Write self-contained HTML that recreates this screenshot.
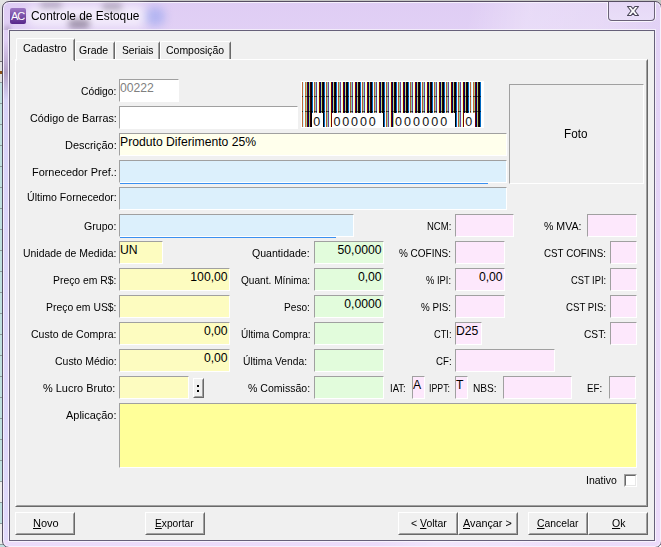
<!DOCTYPE html><html><head><meta charset="utf-8"><title>Controle de Estoque</title><style>
html,body{margin:0;padding:0;}
body{width:661px;height:547px;overflow:hidden;background:#fff;font-family:"Liberation Sans",sans-serif;font-size:11px;color:#000;position:relative;}
div,span{box-sizing:border-box;}
.a{position:absolute;}
.win{left:2px;top:1px;width:660px;height:547px;border-radius:7px;background:linear-gradient(100deg,rgba(255,255,255,0) 62%,rgba(255,255,255,0.28) 70%,rgba(255,255,255,0.22) 80%,rgba(255,255,255,0) 90%),linear-gradient(to bottom,#dfcdf4 0,#e1d0f5 30px,#ecdbfa 100%);border:1px solid #564e62;box-shadow:inset 0 0 0 1px #f6f0fd;overflow:hidden;}
.client{left:9px;top:30px;width:646px;height:511px;background:#f0f0f0;border:1px solid #66607a;box-shadow:0 0 0 1px rgba(255,255,255,0.6);}
.lbl{position:absolute;white-space:nowrap;font-size:11px;line-height:13px;height:13px;}
.inp{position:absolute;border:1px solid;border-color:#a0a0a0 #fff #fff #a0a0a0;font-size:12.2px;line-height:14px;padding:1px 1px 0 0;white-space:nowrap;overflow:hidden;}
.r{text-align:right;padding-right:1.4px;}
.btn{position:absolute;height:23px;background:#f0f0f0;border:1px solid;border-color:#fff #696969 #696969 #fff;font-size:11px;text-align:center;line-height:19px;}
.btn:after{content:"";position:absolute;left:0;top:0;right:0;bottom:0;border:1px solid;border-color:#f0f0f0 #a0a0a0 #a0a0a0 #f0f0f0;}
u{text-decoration:underline;}
</style></head><body>
<div class="a" style="left:0;top:0;width:661px;height:8px;background:#c6c6c4"></div>
<div class="a" style="left:0;top:0;width:10px;height:61px;background:linear-gradient(#e4e4e4,#d0d0d0 30px)"></div>
<div class="a" style="left:0;top:61px;width:10px;height:1px;background:#707070"></div>
<div class="a" style="left:0;top:62px;width:10px;height:20px;background:#e0e0e0"></div>
<div class="a" style="left:0;top:71px;width:2px;height:3px;background:#8a5218"></div>
<div class="a" style="left:0;top:82px;width:10px;height:378px;background:repeating-linear-gradient(#8c9c9c 0 1px,#bfe0e0 1px 21px)"></div>
<div class="a" style="left:0;top:460px;width:10px;height:87px;background:repeating-linear-gradient(#8c9c9c 0 1px,#bfe0e0 1px 21px,#8c9c9c 21px 22px,#ececec 22px 42px)"></div>
<div class="a win"></div>
<div class="a" style="left:4px;top:40px;width:4px;height:500px;background:linear-gradient(rgba(205,214,252,0) 0,rgba(120,100,140,0.45) 32px,rgba(205,214,252,0.45) 60px,rgba(205,214,252,0.4) 100%)"></div>
<div class="a" style="left:26px;top:5px;width:122px;height:22px;border-radius:11px;background:rgba(255,255,255,0.6);filter:blur(5px);"></div>
<div class="a" style="left:2px;top:2px;width:300px;height:28px;overflow:hidden;border-radius:7px 0 0 0;"><div class="a" style="left:66px;top:17px;width:22px;height:10px;border-radius:5px;background:rgba(70,55,85,0.45);filter:blur(3px);"></div><div class="a" style="left:100px;top:1px;width:20px;height:7px;border-radius:4px;background:rgba(90,80,100,0.4);filter:blur(3px);"></div><div class="a" style="left:38px;top:0px;width:22px;height:6px;border-radius:3px;background:rgba(90,80,100,0.4);filter:blur(3px);"></div><div class="a" style="left:143px;top:5px;width:20px;height:19px;border-radius:8px;background:rgba(90,130,235,0.32);filter:blur(4px);"></div><div class="a" style="left:3px;top:24px;width:5px;height:40px;background:rgba(90,70,110,0.35);filter:blur(2px);"></div></div>
<div class="a" style="left:10px;top:8px;width:16px;height:16px;border-radius:2px;background:linear-gradient(#9d78c4,#57268a);color:#fff;font-size:11px;line-height:16px;text-align:center;letter-spacing:-1.2px;text-indent:-1px;overflow:hidden;">AC</div>
<div class="a" style="left:31.4px;top:8px;font-size:12px;transform:scaleX(0.9908);transform-origin:0 0;line-height:16px;white-space:nowrap;">Controle de Estoque</div>
<div class="a" style="left:607px;top:2px;width:49px;height:20px;border:1px solid rgba(255,255,255,0.75);border-top:none;border-radius:0 0 5px 5px;"></div>
<div class="a" style="left:608px;top:2px;width:47px;height:19px;border:1px solid #6a6278;border-top:none;border-radius:0 0 4px 4px;background:linear-gradient(#e6d8f6,#e9def8);"></div>
<svg class="a" style="left:625px;top:4px" width="16" height="14" viewBox="0 0 16 14"><path d="M2.5 2.5h3.6l1.9 2.3 1.9-2.3h3.6L9.9 7l3.6 4.5H9.9L8 9.2 6.1 11.5H2.5L6.1 7z" fill="#fdfdfd" stroke="#4a4658" stroke-width="1.1" stroke-linejoin="round"/></svg>
<div class="a client"></div>
<div class="a" style="left:15px;top:59px;width:633px;height:448px;border:1px solid;border-color:#fff #696969 #696969 #fff;"></div>
<div class="a" style="left:16px;top:60px;width:631px;height:446px;border:1px solid;border-color:#f0f0f0 #a0a0a0 #a0a0a0 #f0f0f0;"></div>
<div class="a" style="left:75px;top:41px;width:40px;height:18px;background:#f0f0f0;border:1px solid;border-color:#fff #696969 transparent #fff;border-bottom:none;border-radius:2px 2px 0 0;"></div>
<div class="a" style="left:113px;top:43px;width:1px;height:16px;background:#a0a0a0"></div>
<div class="lbl" style="left:79.4px;top:44px;font-size:11px;transform:scaleX(0.9549);transform-origin:0 0;">Grade</div>
<div class="a" style="left:115px;top:41px;width:45px;height:18px;background:#f0f0f0;border:1px solid;border-color:#fff #696969 transparent #fff;border-bottom:none;border-radius:2px 2px 0 0;"></div>
<div class="a" style="left:158px;top:43px;width:1px;height:16px;background:#a0a0a0"></div>
<div class="lbl" style="left:121.6px;top:44px;font-size:11px;transform:scaleX(0.9338);transform-origin:0 0;">Seriais</div>
<div class="a" style="left:160px;top:41px;width:71px;height:18px;background:#f0f0f0;border:1px solid;border-color:#fff #696969 transparent #fff;border-bottom:none;border-radius:2px 2px 0 0;"></div>
<div class="a" style="left:229px;top:43px;width:1px;height:16px;background:#a0a0a0"></div>
<div class="lbl" style="left:166.2px;top:44px;font-size:11px;transform:scaleX(0.9519);transform-origin:0 0;">Composi&ccedil;&atilde;o</div>
<div class="a" style="left:16px;top:38px;width:59px;height:23px;background:#f0f0f0;border:1px solid;border-color:#fff #696969 transparent #fff;border-bottom:none;border-radius:2px 2px 0 0;"></div>
<div class="a" style="left:73px;top:40px;width:1px;height:20px;background:#a0a0a0"></div>
<div class="lbl" style="left:23.2px;top:42px;font-size:11px;transform:scaleX(0.9789);transform-origin:0 0;">Cadastro</div>
<div class="lbl" style="left:81.4px;top:85px;font-size:11px;transform:scaleX(0.9335);transform-origin:0 0;">C&oacute;digo:</div>
<div class="inp " style="left:119px;top:79px;width:60px;height:23px;background:#fff;color:#808080;">00222</div>
<div class="lbl" style="left:30.0px;top:112px;font-size:11px;transform:scaleX(0.9789);transform-origin:0 0;">C&oacute;digo de Barras:</div>
<div class="inp " style="left:119px;top:106px;width:179px;height:23px;background:#fff;"></div>
<div class="lbl" style="left:65.1px;top:139px;font-size:11px;transform:scaleX(0.9948);transform-origin:0 0;">Descri&ccedil;&atilde;o:</div>
<div class="inp " style="left:119px;top:133px;width:388px;height:23px;background:#ffffec;">Produto Diferimento 25%</div>
<div class="lbl" style="left:32.0px;top:166px;font-size:11px;transform:scaleX(0.9907);transform-origin:0 0;">Fornecedor Pref.:</div>
<div class="inp " style="left:119px;top:160px;width:388px;height:23px;background:#dcf0fc;"></div>
<div class="lbl" style="left:27.0px;top:191px;font-size:11px;transform:scaleX(0.9599);transform-origin:0 0;">&Uacute;ltimo Fornecedor:</div>
<div class="inp " style="left:119px;top:187px;width:388px;height:23px;background:#dcf0fc;"></div>
<div class="lbl" style="left:84.4px;top:220px;font-size:11px;transform:scaleX(0.9631);transform-origin:0 0;">Grupo:</div>
<div class="inp " style="left:119px;top:214px;width:235px;height:23px;background:#dcf0fc;"></div>
<div class="a" style="left:120px;top:183px;width:368px;height:1px;background:#3a90f0"></div>
<div class="a" style="left:120px;top:237px;width:216px;height:1px;background:#3a90f0"></div>
<div class="lbl" style="left:23.3px;top:247px;font-size:11px;transform:scaleX(0.9495);transform-origin:0 0;">Unidade de Medida:</div>
<div class="inp " style="left:119px;top:241px;width:44px;height:23px;background:#fdfcc0;">UN</div>
<div class="lbl" style="left:53.3px;top:274px;font-size:11px;transform:scaleX(0.9442);transform-origin:0 0;">Pre&ccedil;o em R$:</div>
<div class="inp r" style="left:119px;top:268px;width:111px;height:23px;background:#fdfcc0;">100,00</div>
<div class="lbl" style="left:46.3px;top:301px;font-size:11px;transform:scaleX(0.9451);transform-origin:0 0;">Pre&ccedil;o em US$:</div>
<div class="inp " style="left:119px;top:295px;width:111px;height:23px;background:#fdfcc0;"></div>
<div class="lbl" style="left:31.3px;top:328px;font-size:11px;transform:scaleX(0.9578);transform-origin:0 0;">Custo de Compra:</div>
<div class="inp r" style="left:119px;top:322px;width:111px;height:23px;background:#fdfcc0;">0,00</div>
<div class="lbl" style="left:55.1px;top:355px;font-size:11px;transform:scaleX(0.9520);transform-origin:0 0;">Custo M&eacute;dio:</div>
<div class="inp r" style="left:119px;top:349px;width:111px;height:23px;background:#fdfcc0;">0,00</div>
<div class="lbl" style="left:43.3px;top:382px;font-size:11px;transform:scaleX(0.9950);transform-origin:0 0;">% Lucro Bruto:</div>
<div class="inp " style="left:119px;top:376px;width:70px;height:23px;background:#fdfcc0;"></div>
<div class="btn" style="left:193px;top:378px;width:11px;height:20px;"></div>
<div class="a" style="left:197px;top:385px;width:2px;height:2px;background:#000"></div><div class="a" style="left:197px;top:390px;width:2px;height:2px;background:#000"></div>
<div class="lbl" style="left:66.3px;top:409px;font-size:11px;transform:scaleX(0.9948);transform-origin:0 0;">Aplica&ccedil;&atilde;o:</div>
<div class="inp " style="left:119px;top:403px;width:518px;height:65px;background:#ffff99;"></div>
<div class="lbl" style="left:252.1px;top:247px;font-size:11px;transform:scaleX(0.9610);transform-origin:0 0;">Quantidade:</div>
<div class="inp r" style="left:314px;top:241px;width:70px;height:23px;background:#e2fcdc;">50,0000</div>
<div class="lbl" style="left:240.6px;top:274px;font-size:11px;transform:scaleX(0.9188);transform-origin:0 0;">Quant. M&iacute;nima:</div>
<div class="inp r" style="left:314px;top:268px;width:70px;height:23px;background:#e2fcdc;">0,00</div>
<div class="lbl" style="left:284.4px;top:301px;font-size:11px;transform:scaleX(0.9204);transform-origin:0 0;">Peso:</div>
<div class="inp r" style="left:314px;top:295px;width:70px;height:23px;background:#e2fcdc;">0,0000</div>
<div class="lbl" style="left:240.6px;top:328px;font-size:11px;transform:scaleX(0.9109);transform-origin:0 0;">&Uacute;ltima Compra:</div>
<div class="inp " style="left:314px;top:322px;width:70px;height:23px;background:#e2fcdc;"></div>
<div class="lbl" style="left:243.1px;top:355px;font-size:11px;transform:scaleX(0.9360);transform-origin:0 0;">&Uacute;ltima Venda:</div>
<div class="inp " style="left:314px;top:349px;width:70px;height:23px;background:#e2fcdc;"></div>
<div class="lbl" style="left:247.6px;top:382px;font-size:11px;transform:scaleX(0.9584);transform-origin:0 0;">% Comiss&atilde;o:</div>
<div class="inp " style="left:314px;top:376px;width:70px;height:23px;background:#e2fcdc;"></div>
<div class="lbl" style="left:427.1px;top:220px;font-size:11px;transform:scaleX(0.8645);transform-origin:0 0;">NCM:</div>
<div class="inp " style="left:455px;top:214px;width:59px;height:23px;background:#fde8fc;"></div>
<div class="lbl" style="left:399.4px;top:247px;font-size:11px;transform:scaleX(0.9051);transform-origin:0 0;">% COFINS:</div>
<div class="inp " style="left:455px;top:241px;width:50px;height:23px;background:#fde8fc;"></div>
<div class="lbl" style="left:426.4px;top:274px;font-size:11px;transform:scaleX(0.8520);transform-origin:0 0;">% IPI:</div>
<div class="inp r" style="left:455px;top:268px;width:50px;height:23px;background:#fde8fc;">0,00</div>
<div class="lbl" style="left:421.4px;top:301px;font-size:11px;transform:scaleX(0.8922);transform-origin:0 0;">% PIS:</div>
<div class="inp " style="left:455px;top:295px;width:50px;height:23px;background:#fde8fc;"></div>
<div class="lbl" style="left:433.9px;top:328px;font-size:11px;transform:scaleX(0.8421);transform-origin:0 0;">CTI:</div>
<div class="inp " style="left:455px;top:322px;width:27px;height:23px;background:#fde8fc;">D25</div>
<div class="lbl" style="left:436.4px;top:355px;font-size:11px;transform:scaleX(0.8796);transform-origin:0 0;">CF:</div>
<div class="inp " style="left:455px;top:349px;width:100px;height:23px;background:#fde8fc;"></div>
<div class="lbl" style="left:390.4px;top:382px;font-size:11px;transform:scaleX(0.8599);transform-origin:0 0;">IAT:</div>
<div class="inp " style="left:412px;top:376px;width:13px;height:23px;background:#fde8fc;">A</div>
<div class="lbl" style="left:429.0px;top:382px;font-size:11px;transform:scaleX(0.7986);transform-origin:0 0;">IPPT:</div>
<div class="inp " style="left:455px;top:376px;width:13px;height:23px;background:#fde8fc;">T</div>
<div class="lbl" style="left:473.0px;top:382px;font-size:11px;transform:scaleX(0.9226);transform-origin:0 0;">NBS:</div>
<div class="inp " style="left:503px;top:376px;width:69px;height:23px;background:#fde8fc;"></div>
<div class="lbl" style="left:586.6px;top:382px;font-size:11px;transform:scaleX(0.8818);transform-origin:0 0;">EF:</div>
<div class="inp " style="left:609px;top:376px;width:27px;height:23px;background:#fde8fc;"></div>
<div class="lbl" style="left:543.6px;top:220px;font-size:11px;transform:scaleX(0.9635);transform-origin:0 0;">% MVA:</div>
<div class="inp " style="left:587px;top:214px;width:50px;height:23px;background:#fde8fc;"></div>
<div class="lbl" style="left:544.3px;top:247px;font-size:11px;transform:scaleX(0.8908);transform-origin:0 0;">CST COFINS:</div>
<div class="inp " style="left:610px;top:241px;width:27px;height:23px;background:#fde8fc;"></div>
<div class="lbl" style="left:571.1px;top:274px;font-size:11px;transform:scaleX(0.8483);transform-origin:0 0;">CST IPI:</div>
<div class="inp " style="left:610px;top:268px;width:27px;height:23px;background:#fde8fc;"></div>
<div class="lbl" style="left:566.1px;top:301px;font-size:11px;transform:scaleX(0.8783);transform-origin:0 0;">CST PIS:</div>
<div class="inp " style="left:610px;top:295px;width:27px;height:23px;background:#fde8fc;"></div>
<div class="lbl" style="left:584.1px;top:328px;font-size:11px;transform:scaleX(0.9269);transform-origin:0 0;">CST:</div>
<div class="inp " style="left:610px;top:322px;width:27px;height:23px;background:#fde8fc;"></div>
<div class="a" style="left:509px;top:84px;width:135px;height:100px;border:1px solid;border-color:#a0a0a0 #fff #fff #a0a0a0;"></div>
<div class="lbl" style="left:564.2px;top:128px;font-size:12.2px;transform:scaleX(0.9594);transform-origin:0 0;">Foto</div>
<svg class="a" style="left:301px;top:81px" width="183" height="47" viewBox="301 81 183 47" shape-rendering="crispEdges"><rect x="301" y="81" width="183" height="47" fill="#fff"/><rect x="302" y="82" width="1" height="45" fill="#c06838"/><rect x="303" y="82" width="1" height="45" fill="#c8f8ff"/><rect x="305" y="82" width="1" height="45" fill="#c87040"/><rect x="306" y="82" width="1" height="45" fill="#98d498"/><rect x="307" y="82" width="1" height="45" fill="#700000"/><rect x="308" y="82" width="1" height="45" fill="#000068"/><rect x="309" y="82" width="1" height="45" fill="#b0d070"/><rect x="310" y="82" width="1" height="45" fill="#300000"/><rect x="311" y="82" width="1" height="45" fill="#000008"/><rect x="312" y="82" width="1" height="45" fill="#0068c0"/><rect x="314" y="82" width="1" height="45" fill="#b85c30"/><rect x="315" y="82" width="1" height="45" fill="#8cd4a8"/><rect x="316" y="82" width="1" height="45" fill="#70409a"/><rect x="317" y="82" width="1" height="45" fill="#e0ffff"/><rect x="318" y="82" width="1" height="45" fill="#ffffb0"/><rect x="319" y="82" width="1" height="45" fill="#780000"/><rect x="320" y="82" width="1" height="45" fill="#000068"/><rect x="321" y="82" width="1" height="45" fill="#b0d880"/><rect x="322" y="82" width="1" height="45" fill="#300000"/><rect x="323" y="82" width="1" height="45" fill="#000008"/><rect x="324" y="82" width="1" height="45" fill="#0068c0"/><rect x="325" y="82" width="1" height="45" fill="#f0f8ff"/><rect x="326" y="82" width="1" height="45" fill="#b85c30"/><rect x="327" y="82" width="1" height="45" fill="#8cd4a8"/><rect x="328" y="82" width="1" height="45" fill="#70409a"/><rect x="329" y="82" width="1" height="45" fill="#e0ffff"/><rect x="330" y="82" width="1" height="45" fill="#ffffb0"/><rect x="331" y="82" width="1" height="45" fill="#780000"/><rect x="332" y="82" width="1" height="45" fill="#000068"/><rect x="333" y="82" width="1" height="45" fill="#b0d880"/><rect x="334" y="82" width="1" height="45" fill="#300000"/><rect x="335" y="82" width="1" height="45" fill="#000008"/><rect x="336" y="82" width="1" height="45" fill="#0068c0"/><rect x="337" y="82" width="1" height="45" fill="#f0f8ff"/><rect x="338" y="82" width="1" height="45" fill="#b85c30"/><rect x="339" y="82" width="1" height="45" fill="#8cd4a8"/><rect x="340" y="82" width="1" height="45" fill="#70409a"/><rect x="341" y="82" width="1" height="45" fill="#e0ffff"/><rect x="342" y="82" width="1" height="45" fill="#ffffb0"/><rect x="343" y="82" width="1" height="45" fill="#780000"/><rect x="344" y="82" width="1" height="45" fill="#000068"/><rect x="345" y="82" width="1" height="45" fill="#b0d880"/><rect x="346" y="82" width="1" height="45" fill="#300000"/><rect x="347" y="82" width="1" height="45" fill="#000008"/><rect x="348" y="82" width="1" height="45" fill="#0068c0"/><rect x="349" y="82" width="1" height="45" fill="#f0f8ff"/><rect x="350" y="82" width="1" height="45" fill="#b85c30"/><rect x="351" y="82" width="1" height="45" fill="#8cd4a8"/><rect x="352" y="82" width="1" height="45" fill="#70409a"/><rect x="353" y="82" width="1" height="45" fill="#e0ffff"/><rect x="354" y="82" width="1" height="45" fill="#ffffb0"/><rect x="355" y="82" width="1" height="45" fill="#780000"/><rect x="356" y="82" width="1" height="45" fill="#000068"/><rect x="357" y="82" width="1" height="45" fill="#b0d880"/><rect x="358" y="82" width="1" height="45" fill="#300000"/><rect x="359" y="82" width="1" height="45" fill="#000008"/><rect x="360" y="82" width="1" height="45" fill="#0068c0"/><rect x="361" y="82" width="1" height="45" fill="#f0f8ff"/><rect x="362" y="82" width="1" height="45" fill="#b85c30"/><rect x="363" y="82" width="1" height="45" fill="#8cd4a8"/><rect x="364" y="82" width="1" height="45" fill="#70409a"/><rect x="365" y="82" width="1" height="45" fill="#e0ffff"/><rect x="366" y="82" width="1" height="45" fill="#ffffb0"/><rect x="367" y="82" width="1" height="45" fill="#780000"/><rect x="368" y="82" width="1" height="45" fill="#000068"/><rect x="369" y="82" width="1" height="45" fill="#b0d880"/><rect x="370" y="82" width="1" height="45" fill="#300000"/><rect x="371" y="82" width="1" height="45" fill="#000008"/><rect x="372" y="82" width="1" height="45" fill="#0068c0"/><rect x="373" y="82" width="1" height="45" fill="#f0f8ff"/><rect x="374" y="82" width="1" height="45" fill="#b85c30"/><rect x="375" y="82" width="1" height="45" fill="#8cd4a8"/><rect x="376" y="82" width="1" height="45" fill="#70409a"/><rect x="377" y="82" width="1" height="45" fill="#e0ffff"/><rect x="378" y="82" width="1" height="45" fill="#ffffb0"/><rect x="379" y="82" width="1" height="45" fill="#780000"/><rect x="380" y="82" width="1" height="45" fill="#000068"/><rect x="381" y="82" width="1" height="45" fill="#b0d880"/><rect x="382" y="82" width="1" height="45" fill="#300000"/><rect x="383" y="82" width="1" height="45" fill="#000008"/><rect x="384" y="82" width="1" height="45" fill="#0068c0"/><rect x="385" y="82" width="1" height="45" fill="#f0f8ff"/><rect x="386" y="82" width="1" height="45" fill="#b85c30"/><rect x="387" y="82" width="1" height="45" fill="#8cd4a8"/><rect x="388" y="82" width="1" height="45" fill="#70409a"/><rect x="389" y="82" width="1" height="45" fill="#e0ffff"/><rect x="390" y="82" width="1" height="45" fill="#ffffb0"/><rect x="391" y="82" width="1" height="45" fill="#780000"/><rect x="392" y="82" width="1" height="45" fill="#000068"/><rect x="393" y="82" width="1" height="45" fill="#b0d880"/><rect x="394" y="82" width="1" height="45" fill="#300000"/><rect x="395" y="82" width="1" height="45" fill="#000008"/><rect x="396" y="82" width="1" height="45" fill="#0068c0"/><rect x="397" y="82" width="1" height="45" fill="#f0f8ff"/><rect x="398" y="82" width="1" height="45" fill="#b85c30"/><rect x="399" y="82" width="1" height="45" fill="#8cd4a8"/><rect x="400" y="82" width="1" height="45" fill="#70409a"/><rect x="401" y="82" width="1" height="45" fill="#e0ffff"/><rect x="402" y="82" width="1" height="45" fill="#ffffb0"/><rect x="403" y="82" width="1" height="45" fill="#780000"/><rect x="404" y="82" width="1" height="45" fill="#000068"/><rect x="405" y="82" width="1" height="45" fill="#b0d880"/><rect x="406" y="82" width="1" height="45" fill="#300000"/><rect x="407" y="82" width="1" height="45" fill="#000008"/><rect x="408" y="82" width="1" height="45" fill="#0068c0"/><rect x="409" y="82" width="1" height="45" fill="#f0f8ff"/><rect x="410" y="82" width="1" height="45" fill="#b85c30"/><rect x="411" y="82" width="1" height="45" fill="#8cd4a8"/><rect x="412" y="82" width="1" height="45" fill="#70409a"/><rect x="413" y="82" width="1" height="45" fill="#e0ffff"/><rect x="414" y="82" width="1" height="45" fill="#ffffb0"/><rect x="415" y="82" width="1" height="45" fill="#780000"/><rect x="416" y="82" width="1" height="45" fill="#000068"/><rect x="417" y="82" width="1" height="45" fill="#b0d880"/><rect x="418" y="82" width="1" height="45" fill="#300000"/><rect x="419" y="82" width="1" height="45" fill="#000008"/><rect x="420" y="82" width="1" height="45" fill="#0068c0"/><rect x="421" y="82" width="1" height="45" fill="#f0f8ff"/><rect x="422" y="82" width="1" height="45" fill="#b85c30"/><rect x="423" y="82" width="1" height="45" fill="#8cd4a8"/><rect x="424" y="82" width="1" height="45" fill="#70409a"/><rect x="425" y="82" width="1" height="45" fill="#e0ffff"/><rect x="426" y="82" width="1" height="45" fill="#ffffb0"/><rect x="427" y="82" width="1" height="45" fill="#780000"/><rect x="428" y="82" width="1" height="45" fill="#000068"/><rect x="429" y="82" width="1" height="45" fill="#b0d880"/><rect x="430" y="82" width="1" height="45" fill="#300000"/><rect x="431" y="82" width="1" height="45" fill="#000008"/><rect x="432" y="82" width="1" height="45" fill="#0068c0"/><rect x="433" y="82" width="1" height="45" fill="#f0f8ff"/><rect x="434" y="82" width="1" height="45" fill="#b85c30"/><rect x="435" y="82" width="1" height="45" fill="#8cd4a8"/><rect x="436" y="82" width="1" height="45" fill="#70409a"/><rect x="437" y="82" width="1" height="45" fill="#e0ffff"/><rect x="438" y="82" width="1" height="45" fill="#ffffb0"/><rect x="439" y="82" width="1" height="45" fill="#780000"/><rect x="440" y="82" width="1" height="45" fill="#000068"/><rect x="441" y="82" width="1" height="45" fill="#b0d880"/><rect x="442" y="82" width="1" height="45" fill="#300000"/><rect x="443" y="82" width="1" height="45" fill="#000008"/><rect x="444" y="82" width="1" height="45" fill="#0068c0"/><rect x="445" y="82" width="1" height="45" fill="#f0f8ff"/><rect x="446" y="82" width="1" height="45" fill="#b85c30"/><rect x="447" y="82" width="1" height="45" fill="#8cd4a8"/><rect x="448" y="82" width="1" height="45" fill="#70409a"/><rect x="449" y="82" width="1" height="45" fill="#e0ffff"/><rect x="450" y="82" width="1" height="45" fill="#ffffb0"/><rect x="451" y="82" width="1" height="45" fill="#780000"/><rect x="452" y="82" width="1" height="45" fill="#000068"/><rect x="453" y="82" width="1" height="45" fill="#b0d880"/><rect x="454" y="82" width="1" height="45" fill="#300000"/><rect x="455" y="82" width="1" height="45" fill="#000008"/><rect x="456" y="82" width="1" height="45" fill="#0068c0"/><rect x="457" y="82" width="1" height="45" fill="#f0f8ff"/><rect x="458" y="82" width="1" height="45" fill="#b85c30"/><rect x="459" y="82" width="1" height="45" fill="#8cd4a8"/><rect x="460" y="82" width="1" height="45" fill="#70409a"/><rect x="461" y="82" width="1" height="45" fill="#e0ffff"/><rect x="462" y="82" width="1" height="45" fill="#ffffb0"/><rect x="463" y="82" width="1" height="45" fill="#780000"/><rect x="464" y="82" width="1" height="45" fill="#000068"/><rect x="465" y="82" width="1" height="45" fill="#b0d880"/><rect x="466" y="82" width="1" height="45" fill="#300000"/><rect x="467" y="82" width="1" height="45" fill="#000008"/><rect x="468" y="82" width="1" height="45" fill="#0068c0"/><rect x="469" y="82" width="1" height="45" fill="#f0f8ff"/><rect x="470" y="82" width="1" height="45" fill="#c06838"/><rect x="471" y="82" width="1" height="45" fill="#c8f8ff"/><rect x="473" y="82" width="1" height="45" fill="#c87040"/><rect x="474" y="82" width="1" height="45" fill="#98d498"/><rect x="475" y="82" width="1" height="45" fill="#700000"/><rect x="476" y="82" width="1" height="45" fill="#000068"/><rect x="477" y="82" width="1" height="45" fill="#b0d070"/><rect x="478" y="82" width="1" height="45" fill="#300000"/><rect x="479" y="82" width="1" height="45" fill="#000008"/><rect x="480" y="82" width="1" height="45" fill="#0068c0"/><rect x="302" y="96" width="1" height="1" fill="#502b17"/><rect x="302" y="111" width="1" height="1" fill="#502b17"/><rect x="305" y="96" width="1" height="1" fill="#542f1a"/><rect x="305" y="111" width="1" height="1" fill="#542f1a"/><rect x="306" y="96" width="1" height="1" fill="#3f593f"/><rect x="306" y="111" width="1" height="1" fill="#3f593f"/><rect x="307" y="96" width="1" height="1" fill="#2f0000"/><rect x="307" y="111" width="1" height="1" fill="#2f0000"/><rect x="308" y="96" width="1" height="1" fill="#00002b"/><rect x="308" y="111" width="1" height="1" fill="#00002b"/><rect x="309" y="96" width="1" height="1" fill="#49572f"/><rect x="309" y="111" width="1" height="1" fill="#49572f"/><rect x="310" y="96" width="1" height="1" fill="#140000"/><rect x="310" y="111" width="1" height="1" fill="#140000"/><rect x="311" y="96" width="1" height="1" fill="#000003"/><rect x="311" y="111" width="1" height="1" fill="#000003"/><rect x="312" y="96" width="1" height="1" fill="#002b50"/><rect x="312" y="111" width="1" height="1" fill="#002b50"/><rect x="314" y="96" width="1" height="1" fill="#4d2614"/><rect x="314" y="111" width="1" height="1" fill="#4d2614"/><rect x="315" y="96" width="1" height="1" fill="#3a5946"/><rect x="315" y="111" width="1" height="1" fill="#3a5946"/><rect x="316" y="96" width="1" height="1" fill="#2f1a40"/><rect x="316" y="111" width="1" height="1" fill="#2f1a40"/><rect x="319" y="96" width="1" height="1" fill="#320000"/><rect x="319" y="111" width="1" height="1" fill="#320000"/><rect x="320" y="96" width="1" height="1" fill="#00002b"/><rect x="320" y="111" width="1" height="1" fill="#00002b"/><rect x="321" y="96" width="1" height="1" fill="#495a35"/><rect x="321" y="111" width="1" height="1" fill="#495a35"/><rect x="322" y="96" width="1" height="1" fill="#140000"/><rect x="322" y="111" width="1" height="1" fill="#140000"/><rect x="323" y="96" width="1" height="1" fill="#000003"/><rect x="323" y="111" width="1" height="1" fill="#000003"/><rect x="324" y="96" width="1" height="1" fill="#002b50"/><rect x="324" y="111" width="1" height="1" fill="#002b50"/><rect x="326" y="96" width="1" height="1" fill="#4d2614"/><rect x="326" y="111" width="1" height="1" fill="#4d2614"/><rect x="327" y="96" width="1" height="1" fill="#3a5946"/><rect x="327" y="111" width="1" height="1" fill="#3a5946"/><rect x="328" y="96" width="1" height="1" fill="#2f1a40"/><rect x="328" y="111" width="1" height="1" fill="#2f1a40"/><rect x="331" y="96" width="1" height="1" fill="#320000"/><rect x="331" y="111" width="1" height="1" fill="#320000"/><rect x="332" y="96" width="1" height="1" fill="#00002b"/><rect x="332" y="111" width="1" height="1" fill="#00002b"/><rect x="333" y="96" width="1" height="1" fill="#495a35"/><rect x="333" y="111" width="1" height="1" fill="#495a35"/><rect x="334" y="96" width="1" height="1" fill="#140000"/><rect x="334" y="111" width="1" height="1" fill="#140000"/><rect x="335" y="96" width="1" height="1" fill="#000003"/><rect x="335" y="111" width="1" height="1" fill="#000003"/><rect x="336" y="96" width="1" height="1" fill="#002b50"/><rect x="336" y="111" width="1" height="1" fill="#002b50"/><rect x="338" y="96" width="1" height="1" fill="#4d2614"/><rect x="338" y="111" width="1" height="1" fill="#4d2614"/><rect x="339" y="96" width="1" height="1" fill="#3a5946"/><rect x="339" y="111" width="1" height="1" fill="#3a5946"/><rect x="340" y="96" width="1" height="1" fill="#2f1a40"/><rect x="340" y="111" width="1" height="1" fill="#2f1a40"/><rect x="343" y="96" width="1" height="1" fill="#320000"/><rect x="343" y="111" width="1" height="1" fill="#320000"/><rect x="344" y="96" width="1" height="1" fill="#00002b"/><rect x="344" y="111" width="1" height="1" fill="#00002b"/><rect x="345" y="96" width="1" height="1" fill="#495a35"/><rect x="345" y="111" width="1" height="1" fill="#495a35"/><rect x="346" y="96" width="1" height="1" fill="#140000"/><rect x="346" y="111" width="1" height="1" fill="#140000"/><rect x="347" y="96" width="1" height="1" fill="#000003"/><rect x="347" y="111" width="1" height="1" fill="#000003"/><rect x="348" y="96" width="1" height="1" fill="#002b50"/><rect x="348" y="111" width="1" height="1" fill="#002b50"/><rect x="350" y="96" width="1" height="1" fill="#4d2614"/><rect x="350" y="111" width="1" height="1" fill="#4d2614"/><rect x="351" y="96" width="1" height="1" fill="#3a5946"/><rect x="351" y="111" width="1" height="1" fill="#3a5946"/><rect x="352" y="96" width="1" height="1" fill="#2f1a40"/><rect x="352" y="111" width="1" height="1" fill="#2f1a40"/><rect x="355" y="96" width="1" height="1" fill="#320000"/><rect x="355" y="111" width="1" height="1" fill="#320000"/><rect x="356" y="96" width="1" height="1" fill="#00002b"/><rect x="356" y="111" width="1" height="1" fill="#00002b"/><rect x="357" y="96" width="1" height="1" fill="#495a35"/><rect x="357" y="111" width="1" height="1" fill="#495a35"/><rect x="358" y="96" width="1" height="1" fill="#140000"/><rect x="358" y="111" width="1" height="1" fill="#140000"/><rect x="359" y="96" width="1" height="1" fill="#000003"/><rect x="359" y="111" width="1" height="1" fill="#000003"/><rect x="360" y="96" width="1" height="1" fill="#002b50"/><rect x="360" y="111" width="1" height="1" fill="#002b50"/><rect x="362" y="96" width="1" height="1" fill="#4d2614"/><rect x="362" y="111" width="1" height="1" fill="#4d2614"/><rect x="363" y="96" width="1" height="1" fill="#3a5946"/><rect x="363" y="111" width="1" height="1" fill="#3a5946"/><rect x="364" y="96" width="1" height="1" fill="#2f1a40"/><rect x="364" y="111" width="1" height="1" fill="#2f1a40"/><rect x="367" y="96" width="1" height="1" fill="#320000"/><rect x="367" y="111" width="1" height="1" fill="#320000"/><rect x="368" y="96" width="1" height="1" fill="#00002b"/><rect x="368" y="111" width="1" height="1" fill="#00002b"/><rect x="369" y="96" width="1" height="1" fill="#495a35"/><rect x="369" y="111" width="1" height="1" fill="#495a35"/><rect x="370" y="96" width="1" height="1" fill="#140000"/><rect x="370" y="111" width="1" height="1" fill="#140000"/><rect x="371" y="96" width="1" height="1" fill="#000003"/><rect x="371" y="111" width="1" height="1" fill="#000003"/><rect x="372" y="96" width="1" height="1" fill="#002b50"/><rect x="372" y="111" width="1" height="1" fill="#002b50"/><rect x="374" y="96" width="1" height="1" fill="#4d2614"/><rect x="374" y="111" width="1" height="1" fill="#4d2614"/><rect x="375" y="96" width="1" height="1" fill="#3a5946"/><rect x="375" y="111" width="1" height="1" fill="#3a5946"/><rect x="376" y="96" width="1" height="1" fill="#2f1a40"/><rect x="376" y="111" width="1" height="1" fill="#2f1a40"/><rect x="379" y="96" width="1" height="1" fill="#320000"/><rect x="379" y="111" width="1" height="1" fill="#320000"/><rect x="380" y="96" width="1" height="1" fill="#00002b"/><rect x="380" y="111" width="1" height="1" fill="#00002b"/><rect x="381" y="96" width="1" height="1" fill="#495a35"/><rect x="381" y="111" width="1" height="1" fill="#495a35"/><rect x="382" y="96" width="1" height="1" fill="#140000"/><rect x="382" y="111" width="1" height="1" fill="#140000"/><rect x="383" y="96" width="1" height="1" fill="#000003"/><rect x="383" y="111" width="1" height="1" fill="#000003"/><rect x="384" y="96" width="1" height="1" fill="#002b50"/><rect x="384" y="111" width="1" height="1" fill="#002b50"/><rect x="386" y="96" width="1" height="1" fill="#4d2614"/><rect x="386" y="111" width="1" height="1" fill="#4d2614"/><rect x="387" y="96" width="1" height="1" fill="#3a5946"/><rect x="387" y="111" width="1" height="1" fill="#3a5946"/><rect x="388" y="96" width="1" height="1" fill="#2f1a40"/><rect x="388" y="111" width="1" height="1" fill="#2f1a40"/><rect x="391" y="96" width="1" height="1" fill="#320000"/><rect x="391" y="111" width="1" height="1" fill="#320000"/><rect x="392" y="96" width="1" height="1" fill="#00002b"/><rect x="392" y="111" width="1" height="1" fill="#00002b"/><rect x="393" y="96" width="1" height="1" fill="#495a35"/><rect x="393" y="111" width="1" height="1" fill="#495a35"/><rect x="394" y="96" width="1" height="1" fill="#140000"/><rect x="394" y="111" width="1" height="1" fill="#140000"/><rect x="395" y="96" width="1" height="1" fill="#000003"/><rect x="395" y="111" width="1" height="1" fill="#000003"/><rect x="396" y="96" width="1" height="1" fill="#002b50"/><rect x="396" y="111" width="1" height="1" fill="#002b50"/><rect x="398" y="96" width="1" height="1" fill="#4d2614"/><rect x="398" y="111" width="1" height="1" fill="#4d2614"/><rect x="399" y="96" width="1" height="1" fill="#3a5946"/><rect x="399" y="111" width="1" height="1" fill="#3a5946"/><rect x="400" y="96" width="1" height="1" fill="#2f1a40"/><rect x="400" y="111" width="1" height="1" fill="#2f1a40"/><rect x="403" y="96" width="1" height="1" fill="#320000"/><rect x="403" y="111" width="1" height="1" fill="#320000"/><rect x="404" y="96" width="1" height="1" fill="#00002b"/><rect x="404" y="111" width="1" height="1" fill="#00002b"/><rect x="405" y="96" width="1" height="1" fill="#495a35"/><rect x="405" y="111" width="1" height="1" fill="#495a35"/><rect x="406" y="96" width="1" height="1" fill="#140000"/><rect x="406" y="111" width="1" height="1" fill="#140000"/><rect x="407" y="96" width="1" height="1" fill="#000003"/><rect x="407" y="111" width="1" height="1" fill="#000003"/><rect x="408" y="96" width="1" height="1" fill="#002b50"/><rect x="408" y="111" width="1" height="1" fill="#002b50"/><rect x="410" y="96" width="1" height="1" fill="#4d2614"/><rect x="410" y="111" width="1" height="1" fill="#4d2614"/><rect x="411" y="96" width="1" height="1" fill="#3a5946"/><rect x="411" y="111" width="1" height="1" fill="#3a5946"/><rect x="412" y="96" width="1" height="1" fill="#2f1a40"/><rect x="412" y="111" width="1" height="1" fill="#2f1a40"/><rect x="415" y="96" width="1" height="1" fill="#320000"/><rect x="415" y="111" width="1" height="1" fill="#320000"/><rect x="416" y="96" width="1" height="1" fill="#00002b"/><rect x="416" y="111" width="1" height="1" fill="#00002b"/><rect x="417" y="96" width="1" height="1" fill="#495a35"/><rect x="417" y="111" width="1" height="1" fill="#495a35"/><rect x="418" y="96" width="1" height="1" fill="#140000"/><rect x="418" y="111" width="1" height="1" fill="#140000"/><rect x="419" y="96" width="1" height="1" fill="#000003"/><rect x="419" y="111" width="1" height="1" fill="#000003"/><rect x="420" y="96" width="1" height="1" fill="#002b50"/><rect x="420" y="111" width="1" height="1" fill="#002b50"/><rect x="422" y="96" width="1" height="1" fill="#4d2614"/><rect x="422" y="111" width="1" height="1" fill="#4d2614"/><rect x="423" y="96" width="1" height="1" fill="#3a5946"/><rect x="423" y="111" width="1" height="1" fill="#3a5946"/><rect x="424" y="96" width="1" height="1" fill="#2f1a40"/><rect x="424" y="111" width="1" height="1" fill="#2f1a40"/><rect x="427" y="96" width="1" height="1" fill="#320000"/><rect x="427" y="111" width="1" height="1" fill="#320000"/><rect x="428" y="96" width="1" height="1" fill="#00002b"/><rect x="428" y="111" width="1" height="1" fill="#00002b"/><rect x="429" y="96" width="1" height="1" fill="#495a35"/><rect x="429" y="111" width="1" height="1" fill="#495a35"/><rect x="430" y="96" width="1" height="1" fill="#140000"/><rect x="430" y="111" width="1" height="1" fill="#140000"/><rect x="431" y="96" width="1" height="1" fill="#000003"/><rect x="431" y="111" width="1" height="1" fill="#000003"/><rect x="432" y="96" width="1" height="1" fill="#002b50"/><rect x="432" y="111" width="1" height="1" fill="#002b50"/><rect x="434" y="96" width="1" height="1" fill="#4d2614"/><rect x="434" y="111" width="1" height="1" fill="#4d2614"/><rect x="435" y="96" width="1" height="1" fill="#3a5946"/><rect x="435" y="111" width="1" height="1" fill="#3a5946"/><rect x="436" y="96" width="1" height="1" fill="#2f1a40"/><rect x="436" y="111" width="1" height="1" fill="#2f1a40"/><rect x="439" y="96" width="1" height="1" fill="#320000"/><rect x="439" y="111" width="1" height="1" fill="#320000"/><rect x="440" y="96" width="1" height="1" fill="#00002b"/><rect x="440" y="111" width="1" height="1" fill="#00002b"/><rect x="441" y="96" width="1" height="1" fill="#495a35"/><rect x="441" y="111" width="1" height="1" fill="#495a35"/><rect x="442" y="96" width="1" height="1" fill="#140000"/><rect x="442" y="111" width="1" height="1" fill="#140000"/><rect x="443" y="96" width="1" height="1" fill="#000003"/><rect x="443" y="111" width="1" height="1" fill="#000003"/><rect x="444" y="96" width="1" height="1" fill="#002b50"/><rect x="444" y="111" width="1" height="1" fill="#002b50"/><rect x="446" y="96" width="1" height="1" fill="#4d2614"/><rect x="446" y="111" width="1" height="1" fill="#4d2614"/><rect x="447" y="96" width="1" height="1" fill="#3a5946"/><rect x="447" y="111" width="1" height="1" fill="#3a5946"/><rect x="448" y="96" width="1" height="1" fill="#2f1a40"/><rect x="448" y="111" width="1" height="1" fill="#2f1a40"/><rect x="451" y="96" width="1" height="1" fill="#320000"/><rect x="451" y="111" width="1" height="1" fill="#320000"/><rect x="452" y="96" width="1" height="1" fill="#00002b"/><rect x="452" y="111" width="1" height="1" fill="#00002b"/><rect x="453" y="96" width="1" height="1" fill="#495a35"/><rect x="453" y="111" width="1" height="1" fill="#495a35"/><rect x="454" y="96" width="1" height="1" fill="#140000"/><rect x="454" y="111" width="1" height="1" fill="#140000"/><rect x="455" y="96" width="1" height="1" fill="#000003"/><rect x="455" y="111" width="1" height="1" fill="#000003"/><rect x="456" y="96" width="1" height="1" fill="#002b50"/><rect x="456" y="111" width="1" height="1" fill="#002b50"/><rect x="458" y="96" width="1" height="1" fill="#4d2614"/><rect x="458" y="111" width="1" height="1" fill="#4d2614"/><rect x="459" y="96" width="1" height="1" fill="#3a5946"/><rect x="459" y="111" width="1" height="1" fill="#3a5946"/><rect x="460" y="96" width="1" height="1" fill="#2f1a40"/><rect x="460" y="111" width="1" height="1" fill="#2f1a40"/><rect x="463" y="96" width="1" height="1" fill="#320000"/><rect x="463" y="111" width="1" height="1" fill="#320000"/><rect x="464" y="96" width="1" height="1" fill="#00002b"/><rect x="464" y="111" width="1" height="1" fill="#00002b"/><rect x="465" y="96" width="1" height="1" fill="#495a35"/><rect x="465" y="111" width="1" height="1" fill="#495a35"/><rect x="466" y="96" width="1" height="1" fill="#140000"/><rect x="466" y="111" width="1" height="1" fill="#140000"/><rect x="467" y="96" width="1" height="1" fill="#000003"/><rect x="467" y="111" width="1" height="1" fill="#000003"/><rect x="468" y="96" width="1" height="1" fill="#002b50"/><rect x="468" y="111" width="1" height="1" fill="#002b50"/><rect x="470" y="96" width="1" height="1" fill="#502b17"/><rect x="470" y="111" width="1" height="1" fill="#502b17"/><rect x="473" y="96" width="1" height="1" fill="#542f1a"/><rect x="473" y="111" width="1" height="1" fill="#542f1a"/><rect x="474" y="96" width="1" height="1" fill="#3f593f"/><rect x="474" y="111" width="1" height="1" fill="#3f593f"/><rect x="475" y="96" width="1" height="1" fill="#2f0000"/><rect x="475" y="111" width="1" height="1" fill="#2f0000"/><rect x="476" y="96" width="1" height="1" fill="#00002b"/><rect x="476" y="111" width="1" height="1" fill="#00002b"/><rect x="477" y="96" width="1" height="1" fill="#49572f"/><rect x="477" y="111" width="1" height="1" fill="#49572f"/><rect x="478" y="96" width="1" height="1" fill="#140000"/><rect x="478" y="111" width="1" height="1" fill="#140000"/><rect x="479" y="96" width="1" height="1" fill="#000003"/><rect x="479" y="111" width="1" height="1" fill="#000003"/><rect x="480" y="96" width="1" height="1" fill="#002b50"/><rect x="480" y="111" width="1" height="1" fill="#002b50"/><rect x="312" y="113" width="11" height="15" fill="#fff"/><rect x="332" y="113" width="51" height="15" fill="#fff"/><rect x="394" y="113" width="61" height="15" fill="#fff"/><rect x="464" y="113" width="11" height="15" fill="#fff"/><g font-family="Liberation Sans" font-size="12.5" fill="#111" shape-rendering="auto"><text x="313.2" y="125.5">0</text><text x="333.4" y="125.5" letter-spacing="1.9">00000</text><text x="395" y="125.5" letter-spacing="2.1">000000</text><text x="465.3" y="125.5">0</text></g></svg>
<div class="lbl" style="left:586.1px;top:474px;font-size:11px;transform:scaleX(0.9531);transform-origin:0 0;">Inativo</div>
<div class="a" style="left:624px;top:474px;width:13px;height:13px;background:#fff;border:1px solid;border-color:#a0a0a0 #fff #fff #a0a0a0;"><div style="width:11px;height:11px;border:1px solid;border-color:#696969 #e8e8e8 #e8e8e8 #696969;"></div></div>
<div class="btn" style="left:15px;top:512px;width:60px;"></div>
<div class="lbl" style="left:32.5px;top:517px;font-size:11px;transform:scaleX(0.9999);transform-origin:0 0;"><u>N</u>ovo</div>
<div class="btn" style="left:145px;top:512px;width:60px;"></div>
<div class="lbl" style="left:155.4px;top:517px;font-size:11px;transform:scaleX(0.9280);transform-origin:0 0;"><u>E</u>xportar</div>
<div class="btn" style="left:398px;top:512px;width:60px;"></div>
<div class="lbl" style="left:410.8px;top:517px;font-size:11px;transform:scaleX(0.9515);transform-origin:0 0;">&lt; <u>V</u>oltar</div>
<div class="btn" style="left:458px;top:512px;width:60px;"></div>
<div class="lbl" style="left:463.1px;top:517px;font-size:11px;transform:scaleX(0.9811);transform-origin:0 0;"><u>A</u>van&ccedil;ar &gt;</div>
<div class="btn" style="left:528px;top:512px;width:60px;"></div>
<div class="lbl" style="left:537.4px;top:517px;font-size:11px;transform:scaleX(0.9425);transform-origin:0 0;"><u>C</u>ancelar</div>
<div class="btn" style="left:588px;top:512px;width:60px;"></div>
<div class="lbl" style="left:611.5px;top:517px;font-size:11px;transform:scaleX(0.9529);transform-origin:0 0;"><u>O</u>k</div>
</body></html>
